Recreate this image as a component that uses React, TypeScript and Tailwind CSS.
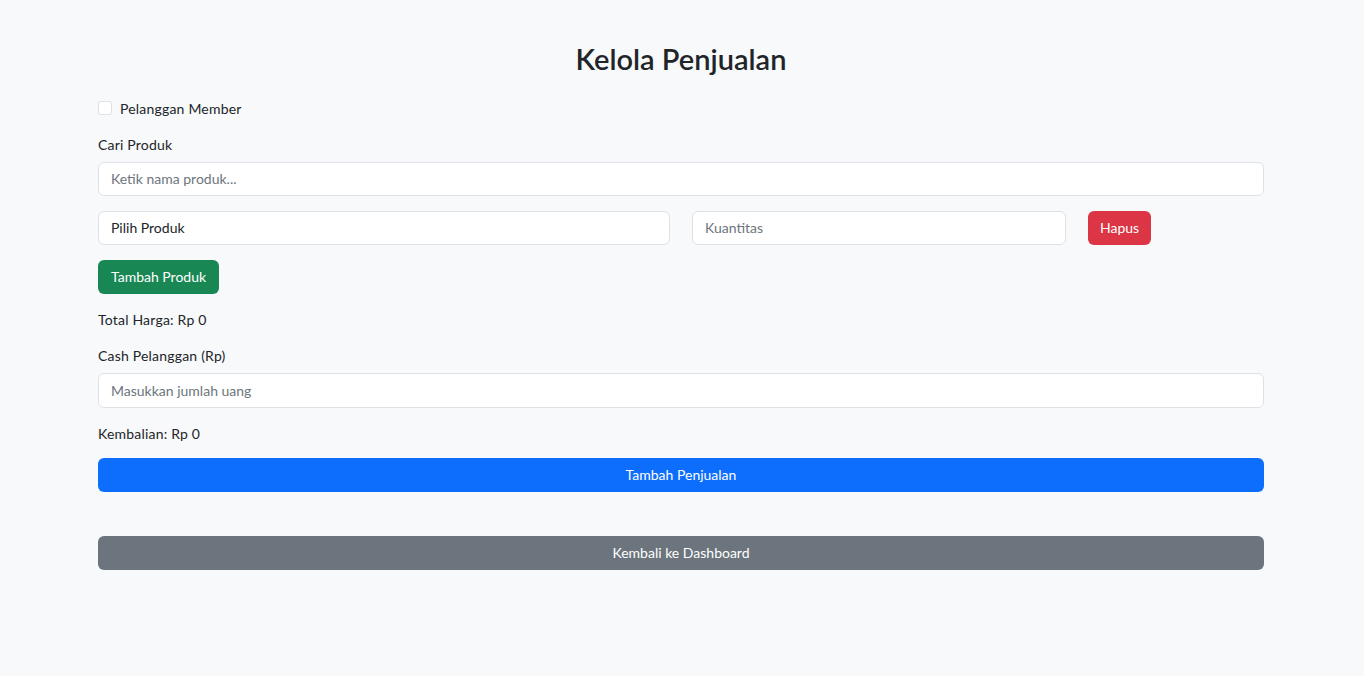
import React from "react";

export default function App() {
  return (
    <div className="min-h-[676px] w-full bg-[#f8f9fa] text-[#212529] text-[14px] leading-[1.5]" style={{ fontFamily: "Lato, 'Noto Sans', sans-serif" }}>
      <div className="ml-[98px] w-[1166px] pt-[42px]">
        <h1 className="text-center text-[29px] font-semibold leading-[1.2] mb-[21px]">Kelola Penjualan</h1>
        <label className="flex items-center gap-[8px] mb-[15px] tracking-[0.2px]">
          <span className="w-[14px] h-[14px] rounded-[3px] border border-[#dee2e6] bg-white" />
          <span>Pelanggan Member</span>
        </label>
        <div className="mb-[7px] tracking-[0.2px]">Cari Produk</div>
        <input className="block w-full h-[34px] px-[12px] rounded-[6px] border border-[#dee2e6] bg-white placeholder:text-[#6c757d] outline-none mb-[15px]" placeholder="Ketik nama produk..." />
        <div className="grid grid-cols-12 gap-x-[22px] mb-[15px]">
          <div className="col-span-6 h-[34px] px-[12px] rounded-[6px] border border-[#dee2e6] bg-white flex items-center">Pilih Produk</div>
          <input className="col-span-4 h-[34px] px-[12px] rounded-[6px] border border-[#dee2e6] bg-white placeholder:text-[#6c757d] outline-none" placeholder="Kuantitas" />
          <div className="col-span-2">
            <button className="h-[34px] px-[12px] rounded-[6px] bg-[#dc3545] text-white">Hapus</button>
          </div>
        </div>
        <button className="h-[34px] px-[13px] rounded-[6px] bg-[#198754] text-white mb-[15px]">Tambah Produk</button>
        <div className="mb-[15px] tracking-[0.2px]">Total Harga: Rp 0</div>
        <div className="mb-[7px] tracking-[0.2px]">Cash Pelanggan (Rp)</div>
        <input className="block w-full h-[35px] px-[12px] rounded-[6px] border border-[#dee2e6] bg-white placeholder:text-[#6c757d] outline-none mb-[15px]" placeholder="Masukkan jumlah uang" />
        <div className="mb-[14px] tracking-[0.2px]">Kembalian: Rp 0</div>
        <button className="block w-full h-[34px] rounded-[6px] bg-[#0d6efd] text-white mb-[44px]">Tambah Penjualan</button>
        <button className="block w-full h-[34px] rounded-[6px] bg-[#6c757d] text-white">Kembali ke Dashboard</button>
      </div>
    </div>
  );
}
